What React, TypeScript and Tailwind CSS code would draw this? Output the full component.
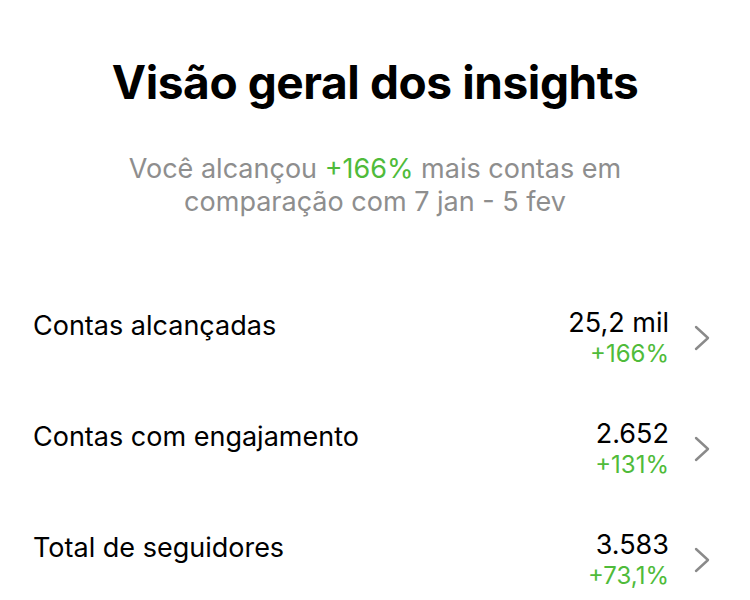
const rows = [
  { label: "Contas alcançadas", value: "25,2 mil", change: "+166%" },
  { label: "Contas com engajamento", value: "2.652", change: "+131%" },
  { label: "Total de seguidores", value: "3.583", change: "+73,1%" },
];

function Chevron() {
  return (
    <svg width="16" height="26" viewBox="0 0 16 26" fill="none" className="ml-[25px]">
      <path d="M2 2L14 13L2 24" stroke="#8a8a8a" strokeWidth="2.4" strokeLinecap="round" strokeLinejoin="round" />
    </svg>
  );
}

function InsightRow({ label, value, change }: { label: string; value: string; change: string }) {
  return (
    <div className="flex items-center h-[111px] pl-[33px] pr-[40px]">
      <span className="self-start mt-[28px] flex-1 text-[27px] leading-[31px] text-black">{label}</span>
      <div className="flex flex-col items-end leading-[31px]">
        <span className="text-[27px] text-black">{value}</span>
        <span className="text-[24px] text-[#4fbb3a]">{change}</span>
      </div>
      <Chevron />
    </div>
  );
}

export default function App() {
  return (
    <div className="w-[750px] h-[600px] bg-white overflow-hidden font-['Inter',sans-serif]">
      <h1 className="pt-[52px] text-center text-[46px] font-bold tracking-[-0.4px] text-black leading-[60px]">
        Visão geral dos insights
      </h1>
      <p className="mt-[40px] mx-auto w-[540px] text-center text-[27px] leading-[33px] text-[#8e8e8e]">
        Você alcançou <span className="text-[#4fbb3a]">+166%</span> mais contas em comparação com 7 jan - 5 fev
      </p>
      <div className="mt-[64px] flex flex-col">
        {rows.map((r) => (
          <InsightRow key={r.label} {...r} />
        ))}
      </div>
    </div>
  );
}
